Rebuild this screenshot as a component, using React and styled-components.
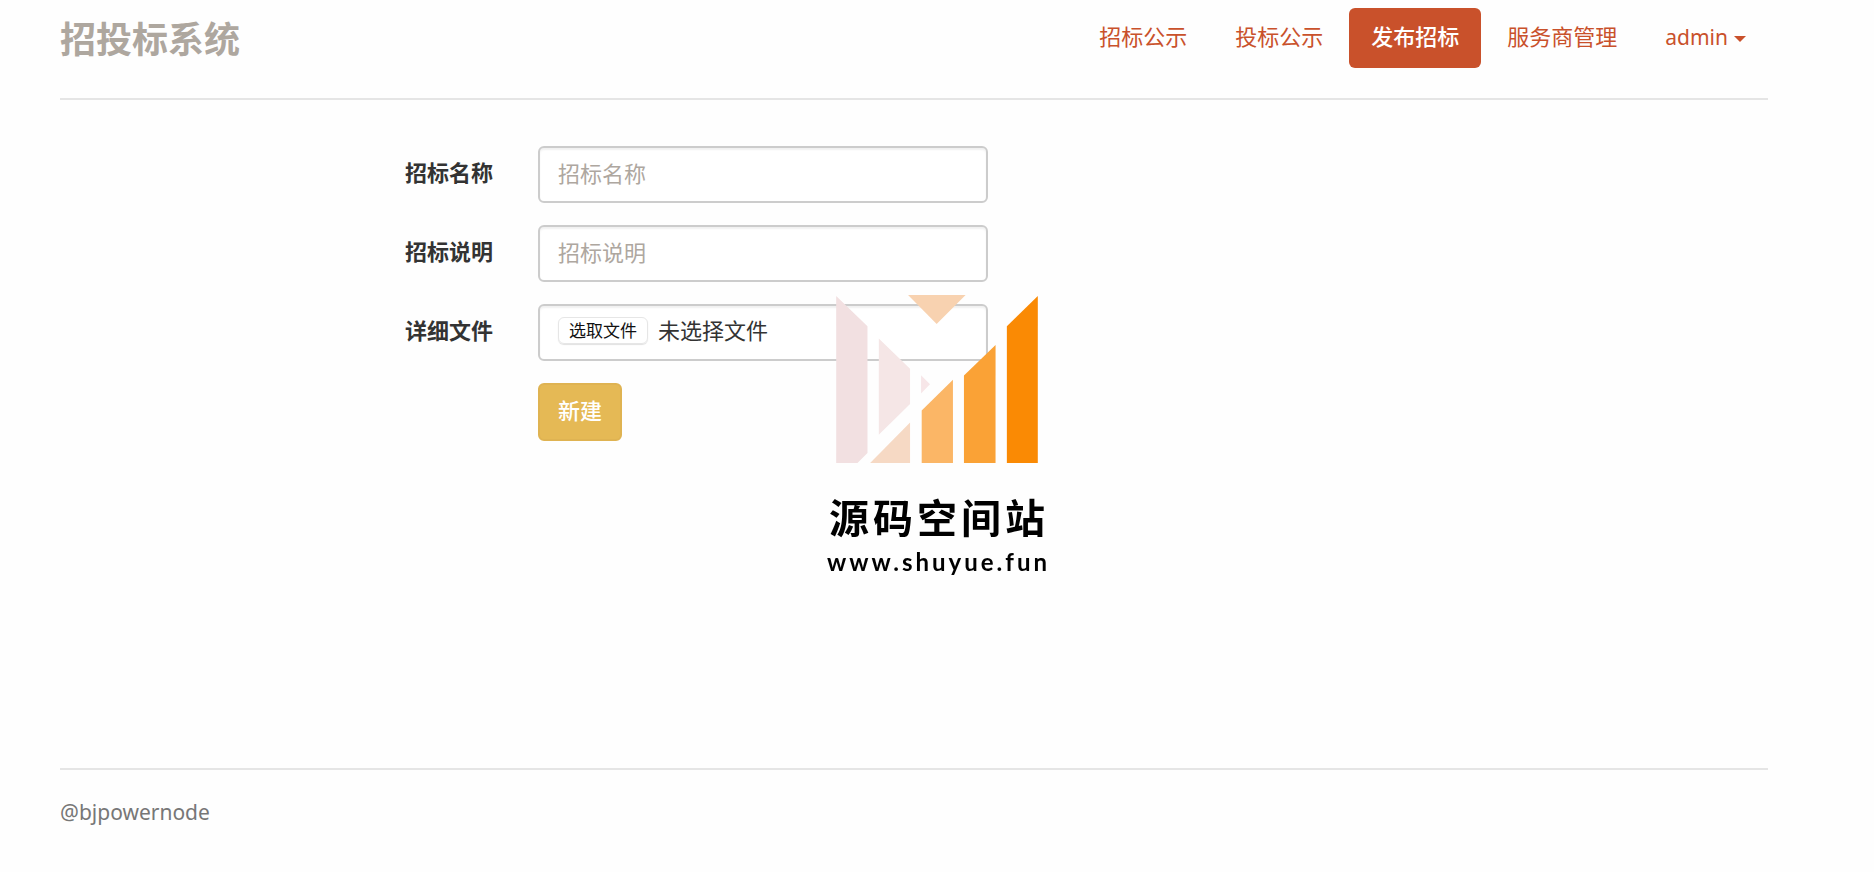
import React from "react";
import styled, { createGlobalStyle } from "styled-components";

const GlobalStyle = createGlobalStyle`
  *, *::before, *::after { box-sizing: border-box; }
  body {
    margin: 0;
    background: #fefefe;
    color: #333;
    font-family: Lato, "Noto Sans CJK SC", sans-serif;
    font-size: 22px;
    line-height: 32px;
  }
  h1, p { margin: 0; }
`;

const latin = `
  font-family: "Noto Sans", "Noto Sans CJK SC", sans-serif;
  font-size: 21px;
`;

const Page = styled.div`
  padding: 8px 106px 0 60px;
`;

const Header = styled.header`
  display: flex;
  justify-content: space-between;
  align-items: flex-start;
  height: 92px;
  border-bottom: 2px solid #e5e5e5;
`;

const Title = styled.h1`
  color: #aea79f;
  font-size: 36px;
  line-height: 62px;
`;

const NavList = styled.ul`
  display: flex;
  gap: 4px;
  margin: 0;
  padding: 0;
  list-style: none;
`;

const NavLink = styled.a`
  display: flex;
  align-items: center;
  gap: 6px;
  padding: 13px 22px 15px;
  border-radius: 6px;
  color: ${(p) => (p.$active ? "#fff" : "#c9512b")};
  background: ${(p) => (p.$active ? "#c9512b" : "transparent")};
  font-weight: ${(p) => (p.$active ? 500 : 400)};
  text-decoration: none;
  ${(p) => p.$menu && latin}
`;

const Caret = styled.span`
  margin-top: 4px;
  border: 6px solid transparent;
  border-top-color: currentColor;
  border-bottom: 0;
`;

const Form = styled.form`
  display: grid;
  grid-template-columns: 433fr 450fr 735fr;
  gap: 22px 45px;
  margin-top: 46px;
  min-height: 622px;
  align-content: start;
`;

const Label = styled.label`
  grid-column: 1;
  padding: 11px 0;
  font-weight: 700;
  text-align: right;
`;

const field = `
  grid-column: 2;
  width: 100%;
  height: 57px;
  border: 2px solid #ccc;
  border-radius: 6px;
  background: #fff;
  box-shadow: inset 0 2px 2px rgba(0, 0, 0, 0.06);
`;

const TextInput = styled.input`
  ${field}
  padding: 0 18px 2px;
  color: #333;
  font: inherit;
  &::placeholder { color: #aea79f; opacity: 1; }
`;

const FileField = styled.label`
  ${field}
  position: relative;
  display: flex;
  align-items: center;
  gap: 10px;
  padding: 0 18px 4px;
`;

const FileInput = styled.input`
  position: absolute;
  inset: 0;
  width: 100%;
  opacity: 0;
`;

const FileButton = styled.span`
  padding: 0 10px;
  border: 1px solid #e6e6e6;
  border-radius: 6px;
  box-shadow: 0 1px 1px rgba(0, 0, 0, 0.12);
  color: #111;
  font-size: 17px;
  line-height: 25px;
`;

const SubmitButton = styled.button`
  grid-column: 2;
  justify-self: start;
  height: 58px;
  padding: 0 18px 2px;
  border: 2px solid #dfb352;
  border-radius: 6px;
  background: #e5b955;
  color: #fff;
  font: inherit;
  font-weight: 500;
`;

const Footer = styled.footer`
  padding: 26px 0;
  border-top: 2px solid #e5e5e5;
  color: #777;
  ${latin}
`;

const Watermark = styled.aside`
  position: fixed;
  inset: 0;
  display: flex;
  flex-direction: column;
  align-items: center;
  justify-content: center;
  color: #000;
  pointer-events: none;
`;

const WatermarkName = styled.p`
  margin-top: 28px;
  padding-left: 4px;
  font-size: 40px;
  font-weight: 700;
  line-height: 54px;
  letter-spacing: 4px;
`;

const WatermarkSite = styled.p`
  padding-left: 3px;
  font-size: 24px;
  font-weight: 700;
  line-height: 33px;
  letter-spacing: 3px;
`;

const navItems = [
  { text: "招标公示" },
  { text: "投标公示" },
  { text: "发布招标", active: true },
  { text: "服务商管理" },
  { text: "admin", menu: true },
];

function BarsLogo() {
  return (
    <svg width="202" height="168" viewBox="108 74 606 505" aria-hidden="true">
      <path fill="#f2e0e1" d="M108 77L202 168V549L172 579H108Z" />
      <path fill="#f5e6e6" d="M236 205L330 296V402L236 494Z" />
      <path fill="#f7e6e8" d="M363 315L390 342L363 370Z" />
      <path fill="#f8d2b0" d="M324 74H497L410 161Z" />
      <path fill="#f6d9c4" d="M330 457V579H210Z" />
      <path fill="#fbb666" d="M459 329V579H365V421Z" />
      <path fill="#faa236" d="M587 224V579H492V316Z" />
      <path fill="#fa8a04" d="M714 77V579H621V168Z" />
    </svg>
  );
}

export default function App() {
  return (
    <>
      <GlobalStyle />
      <Page>
        <Header>
          <Title>招投标系统</Title>
          <nav>
            <NavList>
              {navItems.map((item) => (
                <li key={item.text}>
                  <NavLink href="#" $active={item.active} $menu={item.menu}>
                    {item.text}
                    {item.menu && <Caret />}
                  </NavLink>
                </li>
              ))}
            </NavList>
          </nav>
        </Header>
        <Form>
          <Label htmlFor="name">招标名称</Label>
          <TextInput id="name" type="text" placeholder="招标名称" />
          <Label htmlFor="description">招标说明</Label>
          <TextInput id="description" type="text" placeholder="招标说明" />
          <Label htmlFor="file">详细文件</Label>
          <FileField htmlFor="file">
            <FileButton>选取文件</FileButton>
            未选择文件
            <FileInput id="file" type="file" />
          </FileField>
          <SubmitButton type="submit">新建</SubmitButton>
        </Form>
        <Footer>@bjpowernode</Footer>
      </Page>
      <Watermark>
        <BarsLogo />
        <WatermarkName>源码空间站</WatermarkName>
        <WatermarkSite>www.shuyue.fun</WatermarkSite>
      </Watermark>
    </>
  );
}
